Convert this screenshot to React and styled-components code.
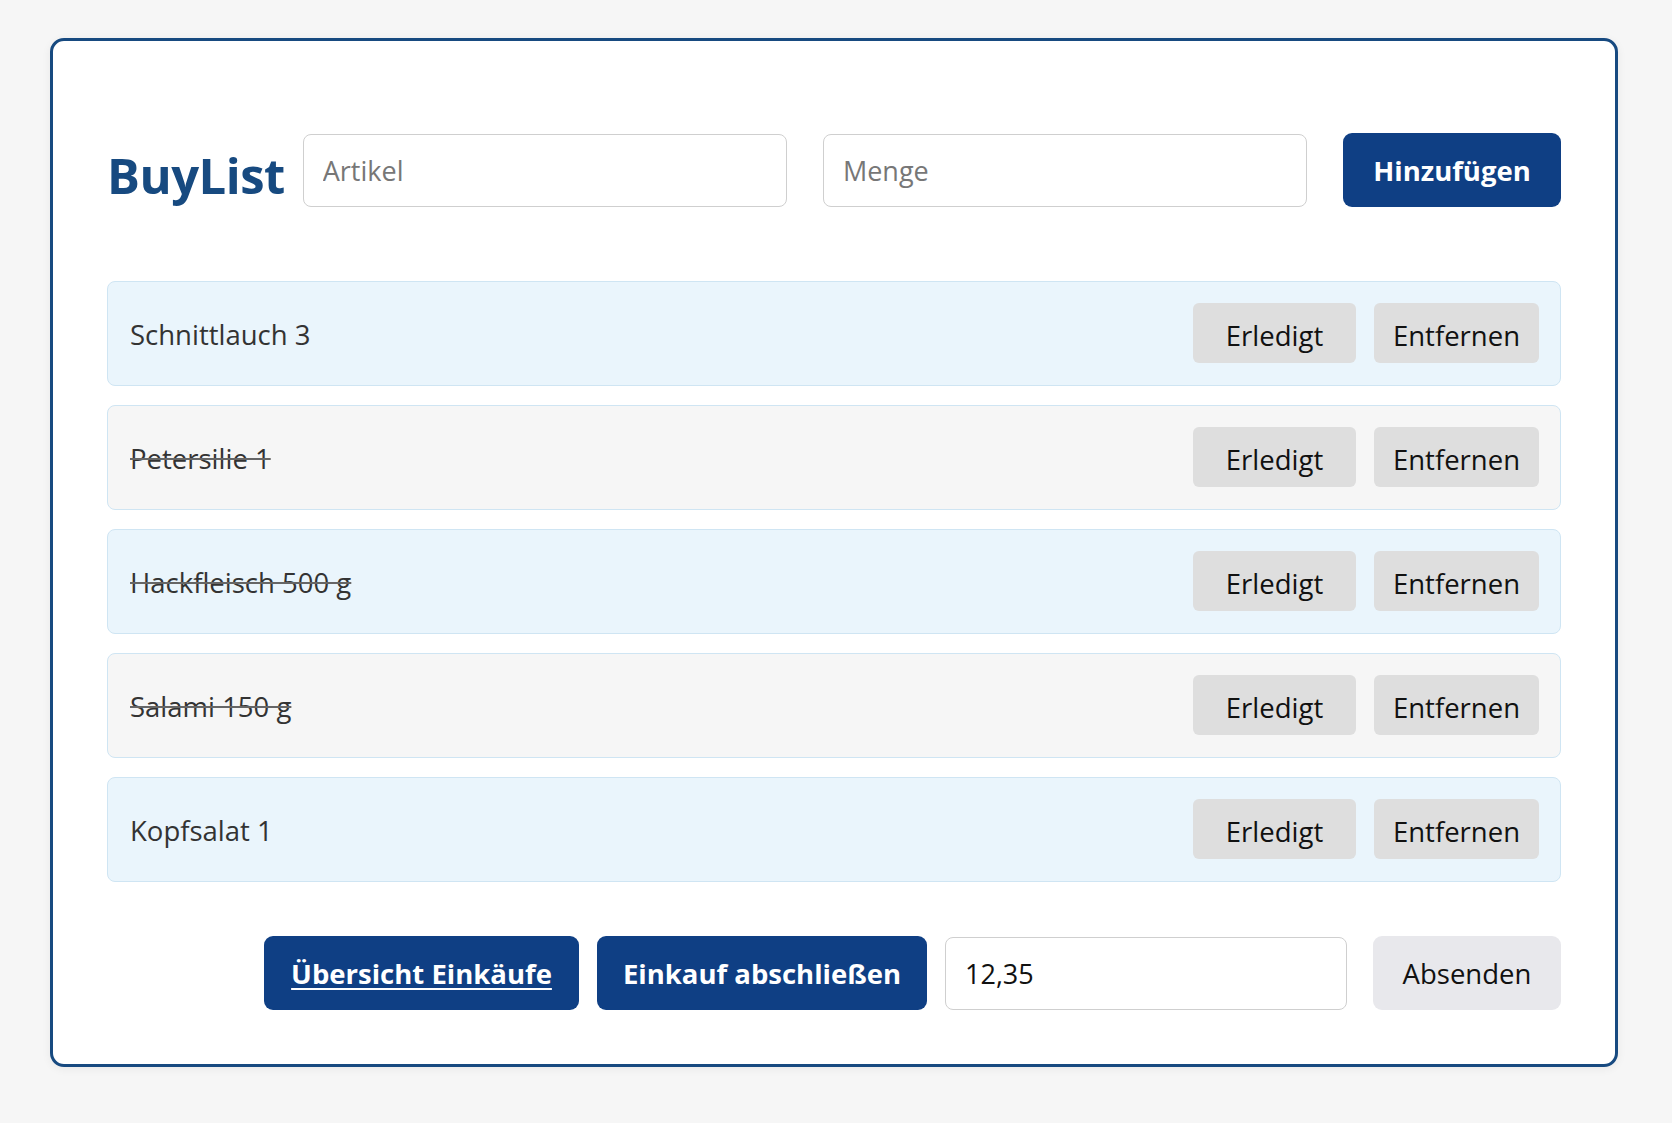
import React from "react";
import styled, { createGlobalStyle } from "styled-components";

const navy = "#0f3f84";
const titleBlue = "#174a80";

const GlobalStyle = createGlobalStyle`
  * { box-sizing: border-box; }
  body {
    margin: 0;
    background: #f6f6f6;
    font-family: "Open Sans", "Noto Sans", sans-serif;
  }
`;

const Page = styled.div`
  min-height: 1123px;
  padding: 38px 0 0 50px;
`;

const Card = styled.section`
  width: 1568px;
  background: #fff;
  border: 3px solid ${titleBlue};
  border-radius: 14px;
  padding: 92px 54px 54px;
  box-shadow: 0 2px 10px rgba(0, 0, 0, 0.06);
`;

const Header = styled.header`
  display: flex;
  align-items: center;
  gap: 18px;
`;

const Title = styled.h1`
  margin: 0;
  color: ${titleBlue};
  font-size: 49px;
  font-weight: 700;
  letter-spacing: -0.5px;
  line-height: 1;
  padding-top: 10px;
`;

const Form = styled.div`
  flex: 1;
  display: flex;
  align-items: center;
  gap: 36px;
`;

const Field = styled.input`
  flex: ${({ $grow }) => ($grow ? 1 : "none")};
  width: ${({ $width }) => $width || "auto"};
  height: 73px;
  padding: 0 19px;
  border: 1px solid #cfcfcf;
  border-radius: 8px;
  font-family: inherit;
  font-size: 27px;
  color: #111;
  background: #fff;
  outline: none;

  &::placeholder {
    color: #777;
  }
`;

const PrimaryButton = styled.button`
  height: 74px;
  width: ${({ $width }) => $width};
  border: none;
  border-radius: 9px;
  background: ${navy};
  color: #fff;
  font-family: inherit;
  font-size: 27.5px;
  font-weight: 700;
  text-decoration: ${({ $link }) => ($link ? "underline" : "none")};
  text-underline-offset: 4px;
  cursor: pointer;
`;

const List = styled.ul`
  list-style: none;
  margin: 74px 0 0;
  padding: 0;
  display: flex;
  flex-direction: column;
  gap: 19px;
`;

const Row = styled.li`
  display: flex;
  align-items: center;
  justify-content: space-between;
  padding: 21px 21px 22px;
  border: 1px solid #cfe5f3;
  border-radius: 8px;
  background: ${({ $alt }) => ($alt ? "#f6f6f6" : "#eaf5fc")};
`;

const ItemText = styled.span`
  padding-left: 1px;
  padding-top: 4px;
  font-size: 27.5px;
  line-height: 1.3;
  color: #333;
  text-decoration: ${({ $done }) => ($done ? "line-through" : "none")};
  text-decoration-color: #666;
`;

const Actions = styled.div`
  display: flex;
  gap: 18px;
`;

const RowButton = styled.button`
  height: 60px;
  min-width: ${({ $width }) => $width};
  padding: 4px 16px 0;
  border: none;
  border-radius: 6px;
  background: #dedede;
  color: #111;
  font-family: inherit;
  font-size: 27.5px;
  cursor: pointer;
`;

const Footer = styled.footer`
  margin-top: 54px;
  display: flex;
  justify-content: flex-end;
  align-items: center;
  gap: 18px;
`;

const SendButton = styled.button`
  height: 74px;
  width: 188px;
  margin-left: 8px;
  border: none;
  border-radius: 9px;
  background: #e8e8ec;
  color: #111;
  font-family: inherit;
  font-size: 27.5px;
  cursor: pointer;
`;

const items = [
  { name: "Schnittlauch 3", done: false },
  { name: "Petersilie 1", done: true },
  { name: "Hackfleisch 500 g", done: true },
  { name: "Salami 150 g", done: true },
  { name: "Kopfsalat 1", done: false },
];

export default function App() {
  return (
    <>
      <GlobalStyle />
      <Page>
        <Card>
          <Header>
            <Title>BuyList</Title>
            <Form>
              <Field $grow placeholder="Artikel" />
              <Field $grow placeholder="Menge" />
              <PrimaryButton $width="218px">Hinzufügen</PrimaryButton>
            </Form>
          </Header>

          <List>
            {items.map((item, i) => (
              <Row key={item.name} $alt={i % 2 === 1}>
                <ItemText $done={item.done}>{item.name}</ItemText>
                <Actions>
                  <RowButton $width="163px">Erledigt</RowButton>
                  <RowButton $width="165px">Entfernen</RowButton>
                </Actions>
              </Row>
            ))}
          </List>

          <Footer>
            <PrimaryButton $width="315px" $link>Übersicht Einkäufe</PrimaryButton>
            <PrimaryButton $width="330px">Einkauf abschließen</PrimaryButton>
            <Field $width="402px" defaultValue="12,35" />
            <SendButton>Absenden</SendButton>
          </Footer>
        </Card>
      </Page>
    </>
  );
}
